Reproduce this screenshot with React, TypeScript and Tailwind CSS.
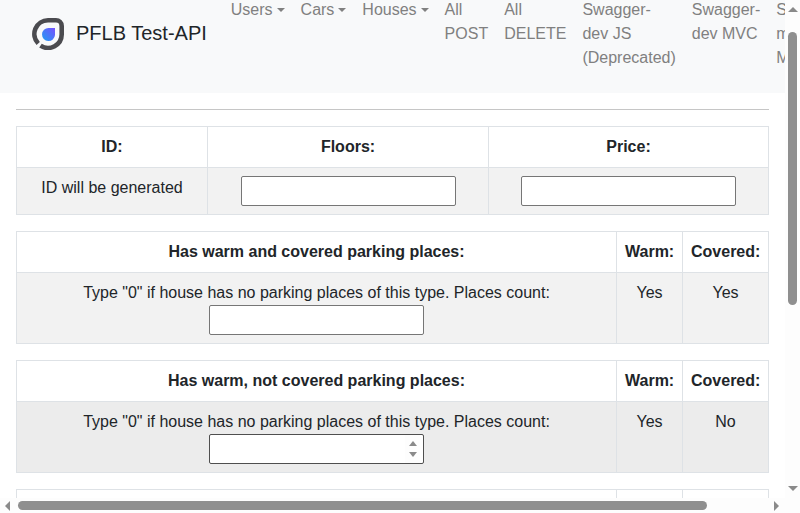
const font = { fontFamily: '"Liberation Sans", Arial, sans-serif' };

function Caret() {
  return (
    <span className="inline-block ml-[4px] align-[3px] border-t-[4px] border-x-[4.2px] border-x-transparent border-t-[#808080]" />
  );
}

function NavItem({ children }: { children: React.ReactNode }) {
  return (
    <a className="block shrink-0 whitespace-nowrap px-2 text-[#808080] text-left">
      {children}
    </a>
  );
}

function Logo() {
  return (
    <svg width="32" height="34" viewBox="0 -2 32 34" className="shrink-0">
      <defs>
        <linearGradient id="drop" x1="0" y1="1" x2="1" y2="0">
          <stop offset="0" stopColor="#1f9df2" />
          <stop offset="1" stopColor="#7650ff" />
        </linearGradient>
      </defs>
      {/* ring with the small gap at lower left */}
      <path
        d="M6.2 25.5A13.7 13.7 0 0 1 16 2.3H24A5.7 5.7 0 0 1 29.7 8V16A13.7 13.7 0 0 1 8.5 27.6"
        fill="none"
        stroke="#4b4b4f"
        strokeWidth="4.6"
      />
      <path d="M16.5 10H23V17A6.5 6.5 0 1 1 16.5 10Z" fill="url(#drop)" />
    </svg>
  );
}

function Th({ children }: { children: React.ReactNode }) {
  return (
    <th className="border border-[#dee2e6] p-2 font-bold text-center align-top">
      {children}
    </th>
  );
}

function Td({ children }: { children: React.ReactNode }) {
  return <td className="border border-[#dee2e6] p-2 text-center align-top">{children}</td>;
}

function TextBox() {
  return (
    <input
      type="text"
      className="block mx-auto w-[215px] h-[30px] bg-white border border-[#767676] rounded-[2px] px-[2px] outline-none"
    />
  );
}

// number field in its hovered state, spinner arrows as in the scrollbars
function NumberBox() {
  return (
    <div className="relative mx-auto w-[215px] h-[30px]">
      <input
        type="number"
        className="block w-full h-full bg-white border border-[#4f4f4f] rounded-[2px] px-[2px] outline-none [appearance:textfield] [&::-webkit-inner-spin-button]:appearance-none"
      />
      <div className="absolute right-[4px] top-[1px] bottom-[1px] w-[15px] bg-[#fdfdfd] flex flex-col items-center justify-between py-[6px]">
        <div className="border-b-[5px] border-x-[4px] border-x-transparent border-b-[#8a8a8a]" />
        <div className="border-t-[5px] border-x-[4px] border-x-transparent border-t-[#8a8a8a]" />
      </div>
    </div>
  );
}

function ParkingTable({
  title,
  warm,
  covered,
  stripe,
  number,
}: {
  title: string;
  warm: string;
  covered: string;
  stripe: string;
  number?: boolean;
}) {
  return (
    <table className="w-[752px] table-fixed border-collapse mb-4 shrink-0">
      <colgroup>
        <col className="w-[600px]" />
        <col className="w-[66px]" />
        <col className="w-[86px]" />
      </colgroup>
      <thead>
        <tr>
          <Th>{title}</Th>
          <Th>Warm:</Th>
          <Th>Covered:</Th>
        </tr>
      </thead>
      <tbody>
        <tr className={stripe}>
          <Td>
            Type "0" if house has no parking places of this type. Places count:
            {number ? <NumberBox /> : <TextBox />}
          </Td>
          <Td>{warm}</Td>
          <Td>{covered}</Td>
        </tr>
      </tbody>
    </table>
  );
}

function VerticalBar() {
  return (
    <div className="w-[15px] shrink-0 bg-[#fdfdfd] flex flex-col items-center">
      <div className="mt-[7px] border-b-[5px] border-x-[5px] border-x-transparent border-b-[#8a8a8a]" />
      <div className="mt-[20px] w-[9px] h-[273px] rounded-[5px] bg-[#8f8f8f]" />
      <div className="mt-auto mb-[7px] border-t-[5px] border-x-[5px] border-x-transparent border-t-[#8a8a8a]" />
    </div>
  );
}

function HorizontalBar() {
  return (
    <div className="h-[15px] shrink-0 bg-[#fdfdfd] flex items-center">
      <div className="ml-[5px] border-r-[5px] border-y-[5px] border-y-transparent border-r-[#8a8a8a]" />
      <div className="ml-[8px] w-[689px] h-[9px] rounded-[5px] bg-[#8f8f8f]" />
      <div className="ml-auto mr-[21px] border-l-[5px] border-y-[5px] border-y-transparent border-l-[#8a8a8a]" />
    </div>
  );
}

export default function App() {
  return (
    <div
      className="w-[800px] h-[513px] overflow-hidden flex flex-col bg-white text-[16px] leading-[24px] text-[#212529]"
      style={font}
    >
      <div className="flex-1 min-h-0 flex">
        <div className="w-[785px] overflow-hidden">
          <nav className="h-[93px] bg-[#f8f9fa] flex items-start pl-8 w-[1100px]">
            <div className="flex items-center gap-[12px] mt-[16px] mr-4 shrink-0">
              <Logo />
              <span className="text-[20px] leading-[34px] text-[#212529]">PFLB Test-API</span>
            </div>
            <div className="flex -mt-[2px]">
              <NavItem>Users<Caret /></NavItem>
              <NavItem>Cars<Caret /></NavItem>
              <NavItem>Houses<Caret /></NavItem>
              <NavItem>All<br />POST</NavItem>
              <NavItem>All<br />DELETE</NavItem>
              <NavItem>Swagger-<br />dev JS<br />(Deprecated)</NavItem>
              <NavItem>Swagger-<br />dev MVC</NavItem>
              <NavItem>Swagger-<br />main<br />MVC</NavItem>
            </div>
          </nav>

          <main className="px-4 pt-4">
            <div className="h-px bg-[#c6c6c6] mb-4" />

            <table className="w-[752px] table-fixed border-collapse mb-4">
              <colgroup>
                <col className="w-[191px]" />
                <col className="w-[281px]" />
                <col className="w-[280px]" />
              </colgroup>
              <thead>
                <tr>
                  <Th>ID:</Th>
                  <Th>Floors:</Th>
                  <Th>Price:</Th>
                </tr>
              </thead>
              <tbody>
                <tr className="bg-[#f2f2f2]">
                  <Td>ID will be generated</Td>
                  <Td><TextBox /></Td>
                  <Td><TextBox /></Td>
                </tr>
              </tbody>
            </table>

            <ParkingTable
              title="Has warm and covered parking places:"
              warm="Yes"
              covered="Yes"
              stripe="bg-[#f2f2f2]"
            />
            <ParkingTable
              title="Has warm, not covered parking places:"
              warm="Yes"
              covered="No"
              stripe="bg-[#ececec]"
              number
            />
            <ParkingTable
              title="Has not warm, covered parking places:"
              warm="No"
              covered="Yes"
              stripe="bg-[#f2f2f2]"
            />
          </main>
        </div>
        <VerticalBar />
      </div>
      <HorizontalBar />
    </div>
  );
}
